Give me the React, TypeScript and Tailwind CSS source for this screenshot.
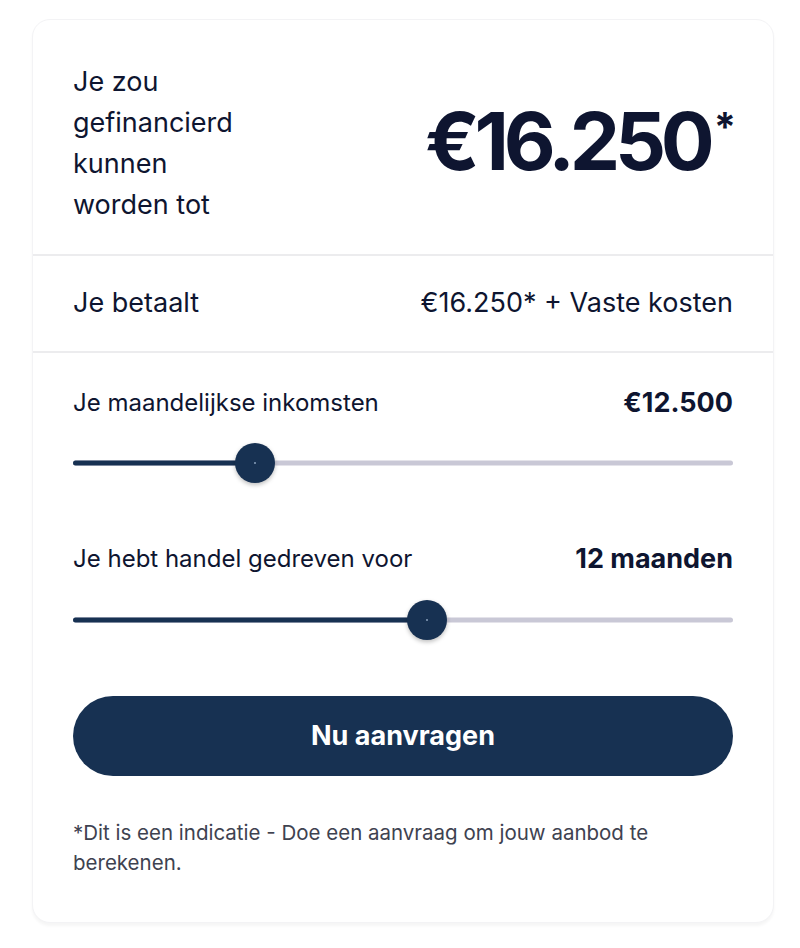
import React from "react";

function Slider({ pct }: { pct: number }) {
  return (
    <div className="relative h-10 w-full">
      <div className="absolute left-0 right-0 top-1/2 h-[5px] -translate-y-1/2 rounded-full bg-[#c9c8d6]" />
      <div
        className="absolute left-0 top-1/2 h-[5px] -translate-y-1/2 rounded-full bg-[#173152]"
        style={{ width: `${pct}%` }}
      />
      <div
        className="absolute top-1/2 h-[40px] w-[40px] -translate-x-1/2 -translate-y-1/2 rounded-full bg-[#173152] shadow-[0_2px_4px_rgba(0,0,0,0.25)] flex items-center justify-center"
        style={{ left: `${pct}%` }}
      >
        <div className="h-[2px] w-[2px] rounded-full bg-[#8aa0bd]" />
      </div>
    </div>
  );
}

export default function App() {
  return (
    <div
      className="min-h-[948px] w-[800px] bg-white pt-[19px]"
      style={{ fontFamily: "Inter, 'Noto Sans', sans-serif" }}
    >
      <div className="mx-[32px] w-[742px] rounded-[18px] border border-[#f3f3f5] bg-white shadow-[0_3px_3px_rgba(0,0,0,0.04)] text-[#0e1530]">
        <div className="flex items-center justify-between px-[40px] pt-[41px] pb-[29px] border-b-2 border-[#ececee]">
          <div className="w-[172px] text-[27px] leading-[41px]">
            Je zou gefinancierd kunnen worden tot
          </div>
          <div className="flex items-start font-bold text-[80px] leading-none tracking-[-0.065em] -mr-[3px] mt-[-4px]">
            <span>€16.250</span>
            <span className="text-[40px] tracking-normal mt-[6px] ml-[4px]">*</span>
          </div>
        </div>
        <div className="flex items-center justify-between px-[40px] h-[97px] border-b-2 border-[#ececee] text-[27px]">
          <span>Je betaalt</span>
          <span>€16.250* + Vaste kosten</span>
        </div>
        <div className="px-[40px] pt-[34px] pb-[44px]">
          <div className="flex items-center justify-between h-[32px]">
            <span className="text-[24px]">Je maandelijkse inkomsten</span>
            <span className="text-[27px] font-bold">€12.500</span>
          </div>
          <div className="mt-[24px]">
            <Slider pct={27.5} />
          </div>
          <div className="mt-[60px] flex items-center justify-between h-[32px]">
            <span className="text-[24px]">Je hebt handel gedreven voor</span>
            <span className="text-[27px] font-bold">12 maanden</span>
          </div>
          <div className="mt-[25px]">
            <Slider pct={53.7} />
          </div>
          <button className="mt-[56px] flex h-[80px] w-full items-center justify-center rounded-full bg-[#173152] text-[27px] font-bold text-white">
            Nu aanvragen
          </button>
          <p className="mt-[42px] text-[20.5px] leading-[30px] text-[#3e4250]">
            *Dit is een indicatie - Doe een aanvraag om jouw aanbod te berekenen.
          </p>
        </div>
      </div>
    </div>
  );
}
